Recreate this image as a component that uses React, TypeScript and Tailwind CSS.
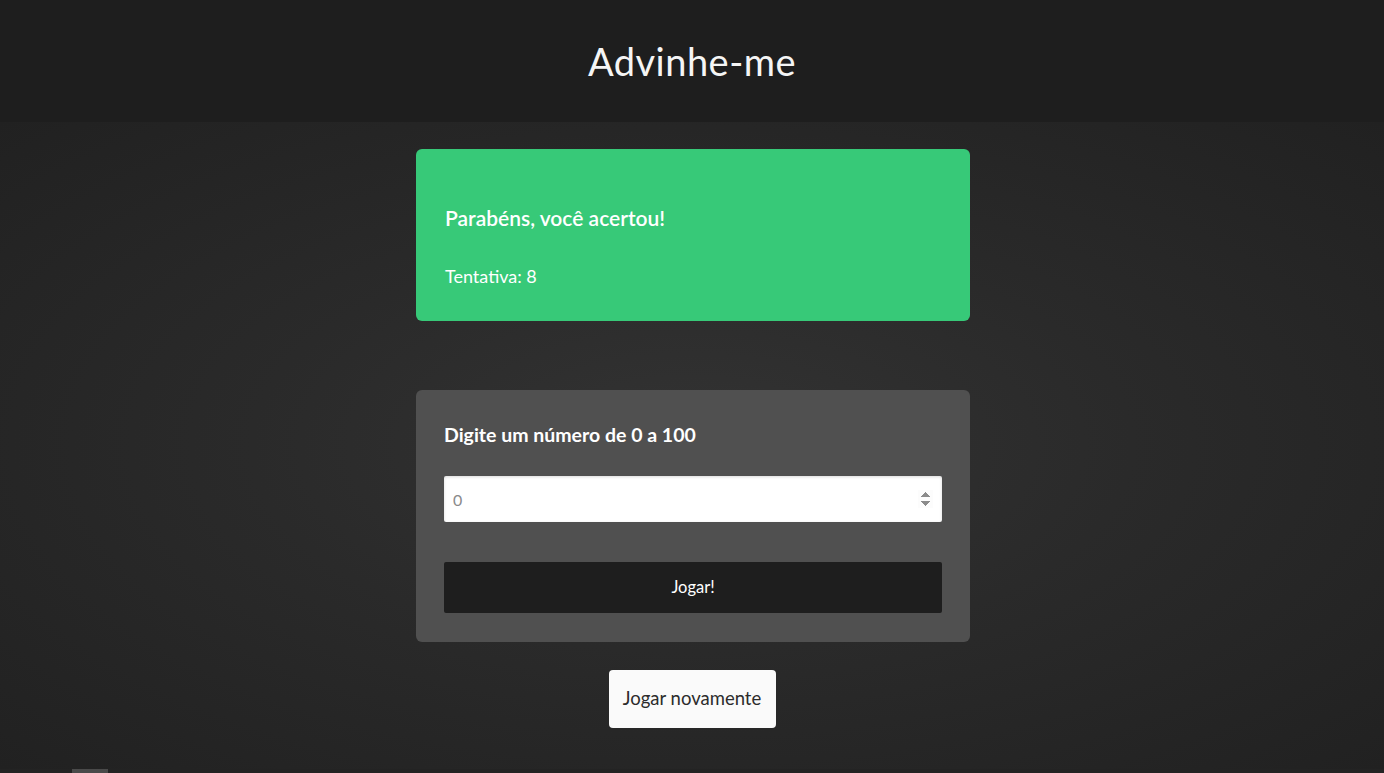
import { useState } from "react";

export default function App() {
  const [guess, setGuess] = useState("");

  return (
    <div
      className="min-h-screen bg-[#232323] text-white"
      style={{ fontFamily: "Lato, 'Noto Sans', sans-serif" }}
    >
      <header className="flex h-[122px] items-center justify-center bg-[#1e1e1e]">
        <h1 className="text-[38px] leading-none tracking-[0.5px] text-[#f5f5f5]">
          Advinhe-me
        </h1>
      </header>

      <main className="flex flex-col items-center bg-[radial-gradient(ellipse_at_center,#333333_0%,#2a2a2a_45%,#212121_100%)] pt-[27px] pb-[41px]">
        <section className="ml-[2px] flex h-[172px] w-[554px] flex-col rounded-md bg-[#37c978] px-[29px] pt-[55px]">
          <h2 className="text-[21px] font-semibold leading-[28px]">
            Parabéns, você acertou!
          </h2>
          <p className="mt-[32px] text-[18px] leading-[24px]">Tentativa: 8</p>
        </section>

        <form
          className="ml-[2px] mt-[69px] flex w-[554px] flex-col rounded-md bg-[#505050] px-[28px] pt-[33px] pb-[29px]"
          onSubmit={(e) => e.preventDefault()}
        >
          <label className="text-[19.5px] font-bold leading-[24px]">
            Digite um número de 0 a 100
          </label>
          <input
            type="number"
            autoFocus
            value={guess}
            onChange={(e) => setGuess(e.target.value)}
            placeholder="0"
            className="mt-[29px] h-[46px] w-full rounded-[2px] bg-white px-[9px] text-[16px] text-[#333] shadow-[inset_0_1px_3px_rgba(0,0,0,0.15)] outline-none placeholder:text-[#8a8a8a]"
          />
          <button
            type="submit"
            className="mt-[40px] h-[51px] w-full rounded-[2px] bg-[#1e1e1e] text-[16.5px] text-white"
          >
            Jogar!
          </button>
        </form>

        <button className="mt-[28px] h-[58px] w-[167px] rounded-[4px] bg-[#fafafa] text-[18.5px] text-[#2c2c2c]">
          Jogar novamente
        </button>
      </main>
      <div className="ml-[72px] h-1 w-9 bg-[#4a4a4a]" />
    </div>
  );
}
